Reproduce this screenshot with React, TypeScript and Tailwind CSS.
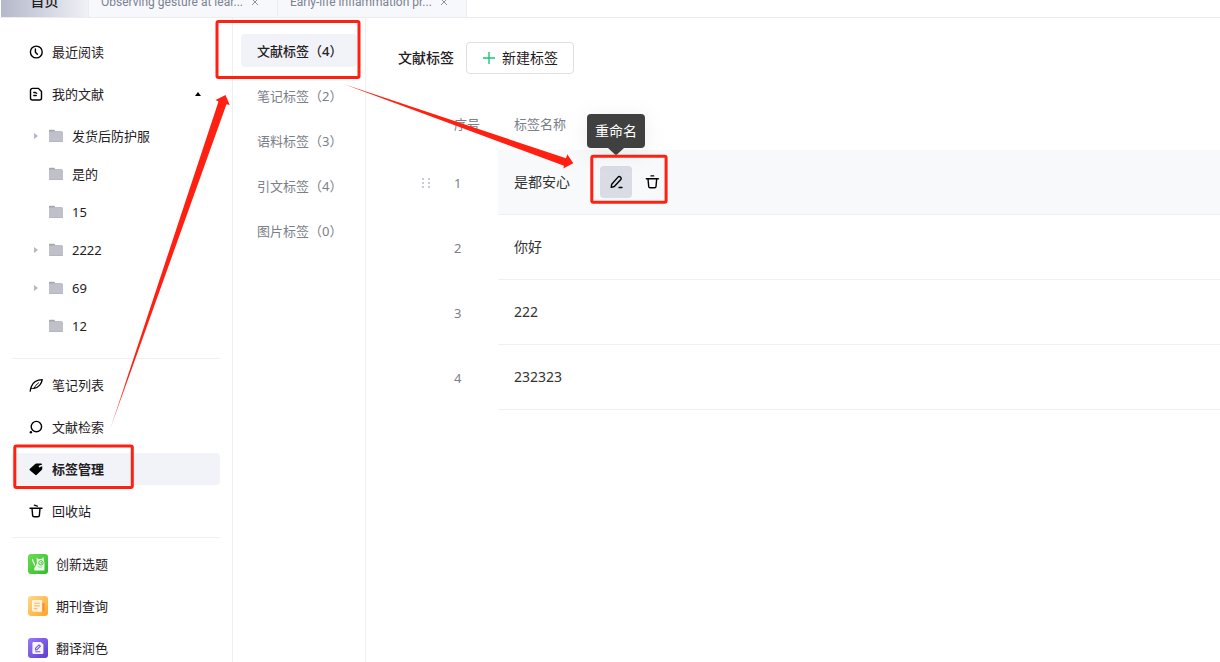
import type { ReactNode } from "react";

const stroke = {
  fill: "none",
  stroke: "currentColor",
  strokeWidth: 1.4,
  strokeLinecap: "round" as const,
  strokeLinejoin: "round" as const,
};

function Icon({ children }: { children: ReactNode }) {
  return (
    <svg viewBox="0 0 16 16" className="size-4 shrink-0 text-black" aria-hidden="true">
      {children}
    </svg>
  );
}

const ClockIcon = () => (
  <Icon>
    <g {...stroke}>
      <circle cx="8.3" cy="8" r="5.9" />
      <path d="M7.400 5v3.200l2 2" />
    </g>
  </Icon>
);

const DocIcon = () => (
  <Icon>
    <g {...stroke}>
      <path d="M4.500 2.400h6L13.500 5.400v6.600a2 2 0 0 1-2 2h-7a2 2 0 0 1-2-2V4.400a2 2 0 0 1 2-2z" />
      <path d="M5.800 6.500h1.600l1.300.8M5.800 9.500h2.500" strokeWidth="1.300" />
    </g>
  </Icon>
);

const FeatherIcon = () => (
  <Icon>
    <g {...stroke} strokeWidth="1.300">
      <path d="M2.200 14.200c.2-2 .7-3.300 1.200-4.700C4.900 5.500 8.800 2.900 14.300 2.700c-.6 3.600-3.500 8-8.300 8.600" />
      <path d="M3.300 11.400c1 .2 2 .1 2.900-.2 1-2.100 2.300-3.900 4.300-5.300" strokeWidth="1" />
    </g>
  </Icon>
);

const SearchIcon = () => (
  <Icon>
    <circle cx="8.400" cy="7.600" r="5.200" {...stroke} />
    <circle cx="2.900" cy="13.200" r="1.200" fill="currentColor" />
  </Icon>
);

const TagIcon = () => (
  <Icon>
    <path
      d="M1.900 7.700 6.900 3.200a2.500 2.500 0 0 1 1.500-.6l4.400-.2a1.300 1.300 0 0 1 1.400 1.100l-2.500.9a.9.900 0 1 0 .6 1.500l1.900-.7.1 2.200a2 2 0 0 1-.6 1.500l-5 4.900a1 1 0 0 1-1.500 0L1.800 9.200a1 1 0 0 1 .1-1.500z"
      fill="currentColor"
    />
  </Icon>
);

const BinIcon = () => (
  <Icon>
    <g {...stroke}>
      <path d="M2 5.200h12M6.400 2.200l2.900.9M4 5.200l.6 7.200a1.500 1.500 0 0 0 1.500 1.400h3.800a1.500 1.500 0 0 0 1.500-1.400l.6-7.200" />
    </g>
  </Icon>
);

const TrashIcon = () => (
  <Icon>
    <g {...stroke}>
      <path d="M2.300 4.700h12M7 1.900h2.700M4 4.700l.7 7.800A1.400 1.400 0 0 0 6.100 13.800h4.500a1.400 1.400 0 0 0 1.400-1.300l.7-7.800" />
    </g>
  </Icon>
);

const PencilIcon = () => (
  <Icon>
    <g {...stroke}>
      <path d="M3.200 13.400l.5-3.200 6.300-7.100a1.600 1.600 0 0 1 2.300-.1l.3.200a1.600 1.600 0 0 1 .2 2.300L6.300 12.500z" />
      <path d="M11 13.500h3" />
    </g>
  </Icon>
);

const FolderIcon = () => (
  <svg viewBox="0 0 14 14" className="h-3.5 w-3.5 shrink-0" aria-hidden="true">
    <path d="M0 1.500a.7.7 0 0 1 .7-.7h4.600l1 1.500H13v3H0z" fill="#a5a6b0" />
    <rect y="2.600" width="14" height="10.400" rx=".8" fill="#bfc0ca" />
    <path d="M0 12.200h14v.1a.8.8 0 0 1-.8.8H.8a.8.8 0 0 1-.8-.8z" fill="#b2b3be" />
  </svg>
);

const TopicIcon = () => (
  <svg viewBox="0 0 20 20" className="size-5 shrink-0" aria-hidden="true">
    <defs>
      <linearGradient id="topic" x1="0" y1="0" x2="1" y2="1">
        <stop stopColor="#66e051" />
        <stop offset="1" stopColor="#36b92f" />
      </linearGradient>
    </defs>
    <rect width="20" height="20" rx="3" fill="url(#topic)" />
    <path
      d="M4.600 5.400c-.4 2.500 1.800 2.800 1.900 5.600"
      fill="none"
      stroke="#e9fbe5"
      strokeWidth="1.300"
      strokeLinecap="round"
    />
    <path
      d="M8.600 3.400l1.800 1.600h3l1.900-1.900.7 3.500c.9 3 .4 6.500.4 9.900H6.400c-1-3.600 2.600-4.600 2.400-7.900z"
      fill="#e9fbe5"
    />
    <circle cx="12.900" cy="8.800" r="2.200" fill="none" stroke="#45c43a" strokeWidth="1" />
    <circle cx="13.300" cy="8.800" r=".8" fill="#45c43a" />
    <path d="M9.800 12.500c1.500 1 3.600.9 4.600-.2" fill="none" stroke="#7bd970" strokeWidth=".8" />
  </svg>
);

const JournalIcon = () => (
  <svg viewBox="0 0 20 20" className="size-5 shrink-0" aria-hidden="true">
    <defs>
      <linearGradient id="journal" x1="0" y1="0" x2="1" y2="1">
        <stop stopColor="#ffd98a" />
        <stop offset="1" stopColor="#fba62a" />
      </linearGradient>
    </defs>
    <rect width="20" height="20" rx="3" fill="url(#journal)" />
    <path d="M13.500 7h2.300a.7.7 0 0 1 .7.700v6a2 2 0 0 1-2 2h-1z" fill="#fb8f2c" />
    <path d="M4.900 4h8.400a.9.900 0 0 1 .9.900v10.800H6a2 2 0 0 1-2-2V4.900A.9.900 0 0 1 4.900 4z" fill="#fff5df" />
    <path d="M6.200 7.200h5.600M6.200 9.900h5.600M6.200 12.600h3.200" stroke="#fbb95a" strokeWidth="1.100" />
  </svg>
);

const PolishIcon = () => (
  <svg viewBox="0 0 20 20" className="size-5 shrink-0" aria-hidden="true">
    <defs>
      <linearGradient id="polish" x1="0" y1="0" x2="1" y2="1">
        <stop stopColor="#9a78f8" />
        <stop offset="1" stopColor="#5b3bd0" />
      </linearGradient>
    </defs>
    <rect width="20" height="20" rx="3" fill="url(#polish)" />
    <path
      d="M5.600 4h7.200l2.600 2.600v8.100a1.200 1.200 0 0 1-1.200 1.200H5.600a1.200 1.200 0 0 1-1.200-1.200V5.200A1.200 1.200 0 0 1 5.600 4z"
      fill="#f7f3ff"
    />
    <path
      d="M7.400 11.900l.3-1.700 3.300-3.400 1.400 1.300-3.400 3.500zM7.300 13.700h5"
      fill="none"
      stroke="#7552e2"
      strokeWidth="1.100"
      strokeLinejoin="round"
    />
  </svg>
);

const folders = [
  { name: "发货后防护服", nested: true },
  { name: "是的", nested: false },
  { name: "15", nested: false },
  { name: "2222", nested: true },
  { name: "69", nested: true },
  { name: "12", nested: false },
];

const tagTypes = [
  { name: "文献标签", count: 4 },
  { name: "笔记标签", count: 2 },
  { name: "语料标签", count: 3 },
  { name: "引文标签", count: 4 },
  { name: "图片标签", count: 0 },
];

const tags = ["是都安心", "你好", "222", "232323"];

function NavItem({ icon, label, active }: { icon: ReactNode; label: string; active?: boolean }) {
  return (
    <a
      href="#"
      aria-current={active ? "page" : undefined}
      className={`flex h-8 items-center gap-2 rounded-sm px-4 ${active ? "bg-[#f2f3f8] font-bold" : ""}`}
    >
      {icon}
      {label}
    </a>
  );
}

function DocTab({ title }: { title: string }) {
  return (
    <div className="flex h-8 w-[189px] shrink-0 items-center justify-between border-r border-[#ebecf0] bg-[#f7f8fc] pt-0.5 pr-[18px] pl-3 font-[Roboto,'Noto_Sans_CJK_SC',sans-serif] text-xs text-[#7b8190]">
      <a href="#" className="whitespace-nowrap">
        {title}
      </a>
      <button type="button" aria-label="关闭">
        <svg viewBox="0 0 8 8" className="size-2" aria-hidden="true">
          <path d="M1 1l6 6M7 1L1 7" stroke="#8d92a0" fill="none" />
        </svg>
      </button>
    </div>
  );
}

function Sidebar() {
  return (
    <aside className="w-[233px] shrink-0 border-r border-[#f0f0f2] px-3 pt-[18px]">
      <nav className="flex flex-col gap-2.5">
        <NavItem icon={<ClockIcon />} label="最近阅读" />
        <a href="#" className="flex h-8 items-center gap-2 px-4">
          <DocIcon />
          <span className="flex-1">我的文献</span>
          <svg viewBox="0 0 6 4" className="mr-[3px] h-1 w-1.5 text-black" aria-hidden="true">
            <path d="M3 0l3 4H0z" fill="currentColor" />
          </svg>
        </a>
        <ul className="flex flex-col gap-1.5 pb-4">
          {folders.map((folder) => (
            <li key={folder.name}>
              <a href="#" className="flex h-8 items-center pl-[22px]">
                <span className="flex w-[15px] items-center">
                  {folder.nested && (
                    <svg viewBox="0 0 4 6" className="h-1.5 w-1" aria-hidden="true">
                      <path d="M0 0l4 3-4 3z" fill="#b3b6c6" />
                    </svg>
                  )}
                </span>
                <FolderIcon />
                <span className="ml-[9px]">{folder.name}</span>
              </a>
            </li>
          ))}
        </ul>
      </nav>
      <nav className="flex flex-col gap-2.5 border-y border-[#f0f0f2] py-2.5">
        <NavItem icon={<FeatherIcon />} label="笔记列表" />
        <NavItem icon={<SearchIcon />} label="文献检索" />
        <NavItem icon={<TagIcon />} label="标签管理" active />
        <NavItem icon={<BinIcon />} label="回收站" />
      </nav>
      <nav className="flex flex-col gap-2.5 pt-2.5">
        <NavItem icon={<TopicIcon />} label="创新选题" />
        <NavItem icon={<JournalIcon />} label="期刊查询" />
        <NavItem icon={<PolishIcon />} label="翻译润色" />
      </nav>
    </aside>
  );
}

function RowActions() {
  return (
    <div className="flex gap-1">
      <div className="relative">
        <button
          type="button"
          aria-label="重命名"
          className="flex size-8 items-center justify-center rounded-sm bg-[#d9dbe5]"
        >
          <PencilIcon />
        </button>
        <div
          role="tooltip"
          className="absolute bottom-[50px] left-1/2 flex h-[34px] w-[58px] -translate-x-1/2 items-center justify-center rounded-sm bg-[#404040] text-sm whitespace-nowrap text-white shadow-[0_4px_24px_rgba(0,0,0,0.08)]"
        >
          重命名
          <svg viewBox="0 0 16 7" className="absolute top-full h-[7px] w-4" aria-hidden="true">
            <path d="M0 0h16L9 6.500a1.500 1.500 0 0 1-2 0z" fill="#404040" />
          </svg>
        </div>
      </div>
      <button type="button" aria-label="删除" className="flex size-8 items-center justify-center">
        <TrashIcon />
      </button>
    </div>
  );
}

function TagTable() {
  return (
    <table className="mt-6 w-full table-fixed border-separate border-spacing-0 text-left">
      <colgroup>
        <col className="w-10" />
        <col className="w-[60px]" />
        <col />
      </colgroup>
      <thead>
        <tr className="h-[52px] text-[#7b8088]">
          <th />
          <th className="pl-4 font-normal">序号</th>
          <th className="pl-4 font-normal">标签名称</th>
        </tr>
      </thead>
      <tbody>
        {tags.map((tag, index) => (
          <tr key={tag} className="h-[65px]">
            <td className="pl-6">
              {index === 0 && (
                <svg viewBox="0 0 8 10" className="h-2.5 w-2" aria-hidden="true">
                  <path
                    d="M0 0h2v2H0zM6 0h2v2H6zM0 4h2v2H0zM6 4h2v2H6zM0 8h2v2H0zM6 8h2v2H6z"
                    fill="#c9cad4"
                  />
                </svg>
              )}
            </td>
            <td className="pl-4 text-[#7b8088]">{index + 1}</td>
            <td className={`border-b border-[#f0f0f2] pl-4 ${index === 0 ? "bg-[#f8f9fb]" : ""}`}>
              <div className="flex items-center gap-[30px] text-sm text-[#333]">
                {tag}
                {index === 0 && <RowActions />}
              </div>
            </td>
          </tr>
        ))}
      </tbody>
    </table>
  );
}

function Annotations() {
  return (
    <svg
      viewBox="0 0 1220 662"
      className="pointer-events-none absolute top-0 left-0 h-[662px] w-[1220px]"
      aria-hidden="true"
    >
      <g fill="none" stroke="#ff2012" strokeWidth="3">
        <rect x="217" y="21.500" width="142" height="56" rx="1.500" />
        <rect x="14.800" y="446" width="117.500" height="41.500" rx="1.500" />
        <rect x="591.800" y="156.200" width="74.300" height="46" rx="1.500" />
      </g>
      <defs>
        <linearGradient id="tail" gradientUnits="userSpaceOnUse" x1="110" y1="430" x2="128" y2="378">
          <stop stopColor="#ff2012" stopOpacity="0.5" />
          <stop offset="1" stopColor="#ff2012" />
        </linearGradient>
      </defs>
      <path
        d="M109.500 431L218.500 101.500 215.500 100 225.500 95 229.800 105 226.500 104.200z"
        fill="url(#tail)"
      />
      <path
        d="M343.500 84L566 158.300 567.300 154.200 573.300 163.300 563.300 168.400 564 165.700z"
        fill="#ff2012"
      />
    </svg>
  );
}

export default function App() {
  return (
    <div className="relative flex h-screen flex-col overflow-hidden bg-white font-['Noto_Sans','Noto_Sans_CJK_SC',sans-serif] text-[13px] leading-5 text-[#1f2024]">
      <header className="flex h-[18px] shrink-0 items-end overflow-hidden border-b border-[#ebecf0] pl-px">
        <a
          href="#"
          className="flex h-8 w-[88px] shrink-0 items-center justify-center border-r border-[#ebecf0] bg-linear-to-r from-[#b4b8ca] to-[#f0f1f6] text-sm font-medium"
        >
          首页
        </a>
        <DocTab title="Observing gesture at lear..." />
        <DocTab title="Early-life inflammation pr..." />
      </header>
      <div className="flex min-h-0 flex-1">
        <Sidebar />
        <nav className="flex w-[133px] shrink-0 flex-col gap-3 border-r border-[#f0f0f2] px-2 pt-4">
          {tagTypes.map((type, index) => (
            <a
              key={type.name}
              href="#"
              aria-current={index === 0 ? "page" : undefined}
              className={`flex h-[33px] shrink-0 items-center rounded-sm pl-4 whitespace-nowrap ${
                index === 0 ? "bg-[#f2f3f8] font-medium" : "text-[#7b8088]"
              }`}
            >
              {type.name}（{type.count}）
            </a>
          ))}
        </nav>
        <main className="min-w-0 flex-1 pt-6 pl-8">
          <div className="flex items-center gap-3">
            <h1 className="text-sm font-medium">文献标签</h1>
            <button
              type="button"
              className="flex h-8 items-center gap-1.5 rounded-sm border border-[#dcdee8] px-[15px] text-sm"
            >
              <svg viewBox="0 0 14 14" className="size-3.5" aria-hidden="true">
                <path d="M7 1v12M1 7h12" stroke="#1fc47c" strokeWidth="1.400" fill="none" />
              </svg>
              新建标签
            </button>
          </div>
          <TagTable />
        </main>
      </div>
      <Annotations />
    </div>
  );
}
